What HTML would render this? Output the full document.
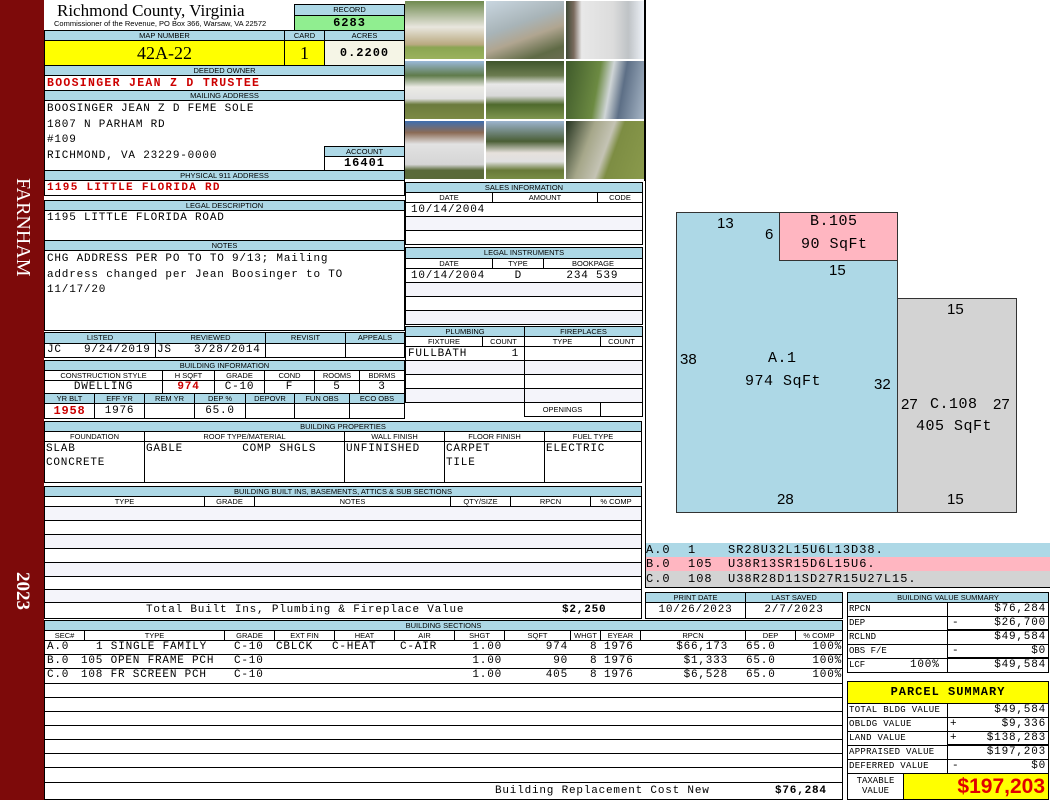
<!DOCTYPE html>
<html><head><meta charset="utf-8"><style>
*{margin:0;padding:0;box-sizing:border-box}
body{width:1050px;height:800px;position:relative;background:#fff;overflow:hidden;font-family:"Liberation Mono",monospace}
div,span.a{position:absolute}
.b{border:1px solid #000;background:#fff;overflow:hidden;white-space:nowrap}
.l{border:1px solid #000;background:#add8e6;font:7.5px/9px "Liberation Sans",sans-serif;text-align:center;overflow:hidden;white-space:nowrap;color:#000}
.h{border:1px solid #000;background:#fff;font:7.5px/9px "Liberation Sans",sans-serif;text-align:center;overflow:hidden;white-space:nowrap}
.m{font:11px/13px "Liberation Mono",monospace;letter-spacing:0.8px}
.r{color:#cc0000;font-weight:bold}
.g{background:#f4f4fa}
.t{position:absolute;font:11px/13px "Liberation Mono",monospace;letter-spacing:0.8px;white-space:nowrap}
.rt{text-align:right}
</style></head><body>
<!-- red bar -->
<div style="left:0;top:0;width:44px;height:800px;background:#7d0a0a"></div>
<div style="left:22px;top:178px;width:0;height:0"><div style="transform:rotate(90deg);transform-origin:0 0;left:12px;top:0;color:#fff;font:20px 'Liberation Serif',serif;white-space:nowrap">FARNHAM</div></div>
<div style="left:22px;top:572px;width:0;height:0"><div style="transform:rotate(90deg);transform-origin:0 0;left:11px;top:0;color:#fff;font:bold 19px 'Liberation Serif',serif;white-space:nowrap">2023</div></div>

<!-- header -->
<div style="left:57px;top:1px;font:17px/20px 'Liberation Serif',serif">Richmond County, Virginia</div>
<div style="left:54px;top:19px;font:7.5px/9px 'Liberation Sans',sans-serif">Commissioner of the Revenue, PO Box 366, Warsaw, VA 22572</div>
<div class="l" style="left:294px;top:4px;width:111px;height:12px">RECORD</div>
<div class="b" style="left:294px;top:15px;width:111px;height:16px;background:#90ee90;text-align:center;font:bold 12px/14px 'Liberation Mono',monospace;letter-spacing:1px">6283</div>
<div class="l" style="left:44px;top:30px;width:241px;height:11px">MAP NUMBER</div>
<div class="l" style="left:284px;top:30px;width:41px;height:11px">CARD</div>
<div class="l" style="left:324px;top:30px;width:81px;height:11px">ACRES</div>
<div class="b" style="left:44px;top:40px;width:241px;height:26px;background:#ffff00;text-align:center;font:18px/24px 'Liberation Serif',serif">42A-22</div>
<div class="b" style="left:284px;top:40px;width:41px;height:26px;background:#ffff00;text-align:center;font:18px/24px 'Liberation Serif',serif">1</div>
<div class="b" style="left:324px;top:40px;width:81px;height:26px;background:#f5f5e6;text-align:center;font:bold 12px/24px 'Liberation Mono',monospace;letter-spacing:1px">0.2200</div>
<div class="l" style="left:44px;top:65px;width:361px;height:11px">DEEDED OWNER</div>
<div class="b m r" style="left:44px;top:75px;width:361px;height:16px;padding-left:2px;font-size:11.5px;line-height:15px;letter-spacing:1.3px">BOOSINGER JEAN Z D TRUSTEE</div>
<div class="l" style="left:44px;top:90px;width:361px;height:11px">MAILING ADDRESS</div>
<div class="b m" style="left:44px;top:100px;width:361px;height:71px;padding:1px 2px;line-height:15.5px;white-space:pre">BOOSINGER JEAN Z D FEME SOLE
1807 N PARHAM RD
#109
RICHMOND, VA 23229-0000</div>
<div class="l" style="left:324px;top:146px;width:81px;height:11px">ACCOUNT</div>
<div class="b" style="left:324px;top:156px;width:81px;height:15px;text-align:center;font:bold 12px/13px 'Liberation Mono',monospace;letter-spacing:1px">16401</div>
<div class="l" style="left:44px;top:170px;width:361px;height:11px">PHYSICAL 911 ADDRESS</div>
<div class="b m r" style="left:44px;top:180px;width:361px;height:16px;padding-left:2px;line-height:14px;letter-spacing:1.3px">1195 LITTLE FLORIDA RD</div>
<div class="l" style="left:44px;top:200px;width:361px;height:11px">LEGAL DESCRIPTION</div>
<div class="b m" style="left:44px;top:210px;width:361px;height:31px;padding:1px 2px">1195 LITTLE FLORIDA ROAD</div>
<div class="l" style="left:44px;top:240px;width:361px;height:11px">NOTES</div>
<div class="b m" style="left:44px;top:250px;width:361px;height:81px;padding:1px 2px;line-height:15.5px;white-space:pre">CHG ADDRESS PER PO TO TO 9/13; Mailing
address changed per Jean Boosinger to TO
11/17/20</div>

<!-- listed -->
<div class="l" style="left:44px;top:332px;width:112px;height:12px">LISTED</div>
<div class="l" style="left:155px;top:332px;width:111px;height:12px">REVIEWED</div>
<div class="l" style="left:265px;top:332px;width:81px;height:12px">REVISIT</div>
<div class="l" style="left:345px;top:332px;width:60px;height:12px">APPEALS</div>
<div class="b m" style="left:44px;top:343px;width:112px;height:15px;padding-left:2px;white-space:pre">JC   9/24/2019</div>
<div class="b m" style="left:155px;top:343px;width:111px;height:15px;padding-left:1px;white-space:pre">JS   3/28/2014</div>
<div class="b" style="left:265px;top:343px;width:81px;height:15px"></div>
<div class="b" style="left:345px;top:343px;width:60px;height:15px"></div>

<!-- building info -->
<div class="l" style="left:44px;top:360px;width:361px;height:11px">BUILDING INFORMATION</div>
<div class="h" style="left:44px;top:370px;width:119px;height:11px">CONSTRUCTION STYLE</div>
<div class="h" style="left:162px;top:370px;width:53px;height:11px">H SQFT</div>
<div class="h" style="left:214px;top:370px;width:51px;height:11px">GRADE</div>
<div class="h" style="left:264px;top:370px;width:51px;height:11px">COND</div>
<div class="h" style="left:314px;top:370px;width:46px;height:11px">ROOMS</div>
<div class="h" style="left:359px;top:370px;width:46px;height:11px">BDRMS</div>
<div class="b m" style="left:44px;top:380px;width:119px;height:14px;text-align:center;line-height:12px">DWELLING</div>
<div class="b m r" style="left:162px;top:380px;width:53px;height:14px;text-align:center;line-height:12px">974</div>
<div class="b m" style="left:214px;top:380px;width:51px;height:14px;text-align:center;line-height:12px">C-10</div>
<div class="b m" style="left:264px;top:380px;width:51px;height:14px;text-align:center;line-height:12px">F</div>
<div class="b m" style="left:314px;top:380px;width:46px;height:14px;text-align:center;line-height:12px">5</div>
<div class="b m" style="left:359px;top:380px;width:46px;height:14px;text-align:center;line-height:12px">3</div>
<div class="l" style="left:44px;top:393px;width:51px;height:11px">YR BLT</div>
<div class="l" style="left:94px;top:393px;width:51px;height:11px">EFF YR</div>
<div class="l" style="left:144px;top:393px;width:51px;height:11px">REM YR</div>
<div class="l" style="left:194px;top:393px;width:52px;height:11px">DEP %</div>
<div class="l" style="left:245px;top:393px;width:50px;height:11px">DEPOVR</div>
<div class="l" style="left:294px;top:393px;width:56px;height:11px">FUN OBS</div>
<div class="l" style="left:349px;top:393px;width:56px;height:11px">ECO OBS</div>
<div class="b m r" style="left:44px;top:403px;width:51px;height:16px;text-align:center;line-height:14px;font-size:12px">1958</div>
<div class="b m" style="left:94px;top:403px;width:51px;height:16px;text-align:center;line-height:14px">1976</div>
<div class="b" style="left:144px;top:403px;width:51px;height:16px"></div>
<div class="b m" style="left:194px;top:403px;width:52px;height:16px;text-align:center;line-height:14px">65.0</div>
<div class="b" style="left:245px;top:403px;width:50px;height:16px"></div>
<div class="b" style="left:294px;top:403px;width:56px;height:16px"></div>
<div class="b" style="left:349px;top:403px;width:56px;height:16px"></div>

<!-- building properties -->
<div class="l" style="left:44px;top:421px;width:598px;height:11px">BUILDING PROPERTIES</div>
<div class="h" style="left:44px;top:431px;width:101px;height:11px">FOUNDATION</div>
<div class="h" style="left:144px;top:431px;width:201px;height:11px">ROOF TYPE/MATERIAL</div>
<div class="h" style="left:344px;top:431px;width:101px;height:11px">WALL FINISH</div>
<div class="h" style="left:444px;top:431px;width:101px;height:11px">FLOOR FINISH</div>
<div class="h" style="left:544px;top:431px;width:98px;height:11px">FUEL TYPE</div>
<div class="b m" style="left:44px;top:441px;width:101px;height:42px;padding-left:1px;white-space:pre;line-height:14px">SLAB
CONCRETE</div>
<div class="b m" style="left:144px;top:441px;width:201px;height:42px;padding-left:1px;white-space:pre;line-height:14px">GABLE        COMP SHGLS</div>
<div class="b m" style="left:344px;top:441px;width:101px;height:42px;padding-left:1px;line-height:14px">UNFINISHED</div>
<div class="b m" style="left:444px;top:441px;width:101px;height:42px;padding-left:1px;white-space:pre;line-height:14px">CARPET
TILE</div>
<div class="b m" style="left:544px;top:441px;width:98px;height:42px;padding-left:1px;line-height:14px">ELECTRIC</div>

<!-- built ins -->
<div class="l" style="left:44px;top:486px;width:598px;height:11px">BUILDING BUILT INS, BASEMENTS, ATTICS &amp; SUB SECTIONS</div>
<div class="h" style="left:44px;top:496px;width:161px;height:11px">TYPE</div>
<div class="h" style="left:204px;top:496px;width:51px;height:11px">GRADE</div>
<div class="h" style="left:254px;top:496px;width:197px;height:11px">NOTES</div>
<div class="h" style="left:450px;top:496px;width:61px;height:11px">QTY/SIZE</div>
<div class="h" style="left:510px;top:496px;width:81px;height:11px">RPCN</div>
<div class="h" style="left:590px;top:496px;width:52px;height:11px">% COMP</div>
<div class="b g" style="left:44px;top:506px;width:598px;height:15px"></div>
<div class="b" style="left:44px;top:520px;width:598px;height:15px"></div>
<div class="b g" style="left:44px;top:534px;width:598px;height:15px"></div>
<div class="b" style="left:44px;top:548px;width:598px;height:15px"></div>
<div class="b g" style="left:44px;top:562px;width:598px;height:15px"></div>
<div class="b" style="left:44px;top:576px;width:598px;height:14px"></div>
<div class="b g" style="left:44px;top:589px;width:598px;height:14px"></div>
<div class="b" style="left:44px;top:602px;width:598px;height:17px"></div>
<div class="t" style="left:146px;top:604px">Total Built Ins, Plumbing &amp; Fireplace Value</div>
<div class="t" style="left:562px;top:604px;font-weight:bold">$2,250</div>

<!-- building sections -->
<div class="l" style="left:44px;top:620px;width:799px;height:11px">BUILDING SECTIONS</div>
<div class="h" style="left:44px;top:630px;width:41px;height:11px">SEC#</div>
<div class="h" style="left:84px;top:630px;width:141px;height:11px">TYPE</div>
<div class="h" style="left:224px;top:630px;width:51px;height:11px">GRADE</div>
<div class="h" style="left:274px;top:630px;width:61px;height:11px">EXT FIN</div>
<div class="h" style="left:334px;top:630px;width:61px;height:11px">HEAT</div>
<div class="h" style="left:394px;top:630px;width:61px;height:11px">AIR</div>
<div class="h" style="left:454px;top:630px;width:51px;height:11px">SHGT</div>
<div class="h" style="left:504px;top:630px;width:67px;height:11px">SQFT</div>
<div class="h" style="left:570px;top:630px;width:31px;height:11px">WHGT</div>
<div class="h" style="left:600px;top:630px;width:41px;height:11px">EYEAR</div>
<div class="h" style="left:640px;top:630px;width:106px;height:11px">RPCN</div>
<div class="h" style="left:745px;top:630px;width:51px;height:11px">DEP</div>
<div class="h" style="left:795px;top:630px;width:48px;height:11px">% COMP</div>
<div class="b" style="left:44px;top:640px;width:799px;height:15px"></div>
<div class="b" style="left:44px;top:654px;width:799px;height:15px"></div>
<div class="b" style="left:44px;top:668px;width:799px;height:16px"></div>
<!-- row A -->
<div class="t" style="left:47px;top:641px">A.0</div>
<div class="t" style="left:96px;top:641px">1 SINGLE FAMILY</div>
<div class="t" style="left:234px;top:641px">C-10</div>
<div class="t" style="left:276px;top:641px">CBLCK</div>
<div class="t" style="left:332px;top:641px">C-HEAT</div>
<div class="t" style="left:400px;top:641px">C-AIR</div>
<div class="t rt" style="left:440px;width:62px;top:641px">1.00</div>
<div class="t rt" style="left:510px;width:58px;top:641px">974</div>
<div class="t" style="left:590px;top:641px">8</div>
<div class="t" style="left:604px;top:641px">1976</div>
<div class="t rt" style="left:640px;width:88px;top:641px">$66,173</div>
<div class="t" style="left:746px;top:641px">65.0</div>
<div class="t rt" style="left:790px;width:52px;top:641px">100%</div>
<!-- row B -->
<div class="t" style="left:47px;top:655px">B.0</div>
<div class="t" style="left:81px;top:655px">105 OPEN FRAME PCH</div>
<div class="t" style="left:234px;top:655px">C-10</div>
<div class="t rt" style="left:440px;width:62px;top:655px">1.00</div>
<div class="t rt" style="left:510px;width:58px;top:655px">90</div>
<div class="t" style="left:590px;top:655px">8</div>
<div class="t" style="left:604px;top:655px">1976</div>
<div class="t rt" style="left:640px;width:88px;top:655px">$1,333</div>
<div class="t" style="left:746px;top:655px">65.0</div>
<div class="t rt" style="left:790px;width:52px;top:655px">100%</div>
<!-- row C -->
<div class="t" style="left:47px;top:669px">C.0</div>
<div class="t" style="left:81px;top:669px">108 FR SCREEN PCH</div>
<div class="t" style="left:234px;top:669px">C-10</div>
<div class="t rt" style="left:440px;width:62px;top:669px">1.00</div>
<div class="t rt" style="left:510px;width:58px;top:669px">405</div>
<div class="t" style="left:590px;top:669px">8</div>
<div class="t" style="left:604px;top:669px">1976</div>
<div class="t rt" style="left:640px;width:88px;top:669px">$6,528</div>
<div class="t" style="left:746px;top:669px">65.0</div>
<div class="t rt" style="left:790px;width:52px;top:669px">100%</div>

<div class="b" style="left:44px;top:683px;width:799px;height:15px"></div>
<div class="b" style="left:44px;top:697px;width:799px;height:15px"></div>
<div class="b" style="left:44px;top:711px;width:799px;height:15px"></div>
<div class="b" style="left:44px;top:725px;width:799px;height:15px"></div>
<div class="b" style="left:44px;top:739px;width:799px;height:15px"></div>
<div class="b" style="left:44px;top:753px;width:799px;height:15px"></div>
<div class="b" style="left:44px;top:767px;width:799px;height:16px"></div>
<div class="b" style="left:44px;top:782px;width:799px;height:18px"></div>
<div class="t" style="left:495px;top:785px">Building Replacement Cost New</div>
<div class="t" style="left:775px;top:785px;font-weight:bold">$76,284</div>

<!-- photos -->
<div style="left:405px;top:0;width:240px;height:181px;background:#fff;border-right:1px solid #000"></div>
<div style="left:405px;top:1px;width:79px;height:58px;background:linear-gradient(#6f8a4f 0,#e8e6de 45%,#b9a980 75%,#8aa552 80%,#9bb25e)"></div>
<div style="left:486px;top:1px;width:78px;height:58px;background:linear-gradient(160deg,#c9d6e0 0,#a8b4b8 40%,#b0a590 60%,#5f6a45 85%,#6b6d52)"></div>
<div style="left:566px;top:1px;width:78px;height:58px;background:linear-gradient(90deg,#3f4a35 0,#7a6b5e 10%,#e8e8e8 20%,#dcdcdc 60%,#bfc3c6 80%,#eef2f8)"></div>
<div style="left:405px;top:61px;width:79px;height:58px;background:linear-gradient(#9ab8d8 0,#5f7b4a 25%,#ecebe6 45%,#e0e0e0 65%,#6b7a3c 75%,#7c8a45)"></div>
<div style="left:486px;top:61px;width:78px;height:58px;background:linear-gradient(#40552c 0,#6b7c50 25%,#e8e8e8 40%,#d8d8d8 60%,#4f6a2d 75%,#7f9650)"></div>
<div style="left:566px;top:61px;width:78px;height:58px;background:linear-gradient(100deg,#3f5a2b 0,#6c8a42 40%,#cfd5d6 55%,#5d6f86 70%,#a7b6c6)"></div>
<div style="left:405px;top:121px;width:79px;height:58px;background:linear-gradient(#3f6fb0 0,#8b6b55 20%,#e2e2e2 40%,#d5d5d5 75%,#5a6a3a 85%)"></div>
<div style="left:486px;top:121px;width:78px;height:58px;background:linear-gradient(#9cb4cf 0,#4a5e35 35%,#e6e1dc 55%,#e0e0e0 70%,#687a38 85%,#788c45)"></div>
<div style="left:566px;top:121px;width:78px;height:58px;background:linear-gradient(110deg,#243320 0,#a6a78a 30%,#c4c3b4 50%,#7d8d43 60%,#8a9a4c)"></div>

<!-- sales -->
<div class="l" style="left:405px;top:182px;width:238px;height:11px">SALES INFORMATION</div>
<div class="h" style="left:405px;top:192px;width:88px;height:11px">DATE</div>
<div class="h" style="left:492px;top:192px;width:106px;height:11px">AMOUNT</div>
<div class="h" style="left:597px;top:192px;width:46px;height:11px">CODE</div>
<div class="b m" style="left:405px;top:202px;width:238px;height:15px;padding-left:5px;line-height:15px">10/14/2004</div>
<div class="b g" style="left:405px;top:216px;width:238px;height:15px"></div>
<div class="b" style="left:405px;top:230px;width:238px;height:15px"></div>
<div class="l" style="left:405px;top:247px;width:238px;height:12px">LEGAL INSTRUMENTS</div>
<div class="h" style="left:405px;top:258px;width:88px;height:11px">DATE</div>
<div class="h" style="left:492px;top:258px;width:52px;height:11px">TYPE</div>
<div class="h" style="left:543px;top:258px;width:100px;height:11px">BOOKPAGE</div>
<div class="b m" style="left:405px;top:268px;width:238px;height:15px;padding-left:5px;white-space:pre;line-height:15px">10/14/2004    D      234 539</div>
<div class="b g" style="left:405px;top:282px;width:238px;height:15px"></div>
<div class="b" style="left:405px;top:296px;width:238px;height:15px"></div>
<div class="b g" style="left:405px;top:310px;width:238px;height:15px"></div>
<div class="l" style="left:405px;top:326px;width:120px;height:11px">PLUMBING</div>
<div class="l" style="left:524px;top:326px;width:119px;height:11px">FIREPLACES</div>
<div class="h" style="left:405px;top:336px;width:78px;height:11px">FIXTURE</div>
<div class="h" style="left:482px;top:336px;width:43px;height:11px">COUNT</div>
<div class="h" style="left:524px;top:336px;width:77px;height:11px">TYPE</div>
<div class="h" style="left:600px;top:336px;width:43px;height:11px">COUNT</div>
<div class="b m" style="left:405px;top:346px;width:120px;height:15px;padding-left:2px;white-space:pre;line-height:14px">FULLBATH      1</div>
<div class="b g" style="left:405px;top:360px;width:120px;height:15px"></div>
<div class="b" style="left:405px;top:374px;width:120px;height:15px"></div>
<div class="b g" style="left:405px;top:388px;width:120px;height:15px"></div>
<div class="b" style="left:524px;top:346px;width:119px;height:15px"></div>
<div class="b g" style="left:524px;top:360px;width:119px;height:15px"></div>
<div class="b" style="left:524px;top:374px;width:119px;height:15px"></div>
<div class="b g" style="left:524px;top:388px;width:119px;height:15px"></div>
<div class="h" style="left:524px;top:402px;width:77px;height:15px;line-height:13px">OPENINGS</div>
<div class="b" style="left:600px;top:402px;width:43px;height:15px"></div>

<!-- sketch -->
<div style="left:645px;top:0;width:405px;height:544px;border:1px solid #000;border-top:0;border-right:0;background:#fff"></div>
<div style="left:676px;top:212px;width:222px;height:301px;background:#add8e6;border:1px solid #333"></div>
<div style="left:779px;top:212px;width:119px;height:49px;background:#ffb6c1;border:1px solid #333"></div>
<div style="left:897px;top:298px;width:120px;height:215px;background:#d3d3d3;border:1px solid #333"></div>
<div style="left:717px;top:215px;font:15px 'Liberation Sans',sans-serif">13</div>
<div style="left:765px;top:226px;font:15px 'Liberation Sans',sans-serif">6</div>
<div style="left:810px;top:213px;font:15px/18px 'Liberation Mono',monospace;letter-spacing:0.5px">B.105</div>
<div style="left:801px;top:236px;font:15px/18px 'Liberation Mono',monospace;letter-spacing:0.5px">90 SqFt</div>
<div style="left:829px;top:262px;font:15px 'Liberation Sans',sans-serif">15</div>
<div style="left:947px;top:301px;font:15px 'Liberation Sans',sans-serif">15</div>
<div style="left:680px;top:351px;font:15px 'Liberation Sans',sans-serif">38</div>
<div style="left:768px;top:350px;font:15px/18px 'Liberation Mono',monospace;letter-spacing:0.5px">A.1</div>
<div style="left:745px;top:373px;font:15px/18px 'Liberation Mono',monospace;letter-spacing:0.5px">974 SqFt</div>
<div style="left:874px;top:376px;font:15px 'Liberation Sans',sans-serif">32</div>
<div style="left:901px;top:396px;font:15px 'Liberation Sans',sans-serif">27</div>
<div style="left:930px;top:396px;font:15px/18px 'Liberation Mono',monospace;letter-spacing:0.5px">C.108</div>
<div style="left:993px;top:396px;font:15px 'Liberation Sans',sans-serif">27</div>
<div style="left:916px;top:418px;font:15px/18px 'Liberation Mono',monospace;letter-spacing:0.5px">405 SqFt</div>
<div style="left:777px;top:491px;font:15px 'Liberation Sans',sans-serif">28</div>
<div style="left:947px;top:491px;font:15px 'Liberation Sans',sans-serif">15</div>
<div style="left:645px;top:543px;width:405px;height:15px;background:#add8e6;border-left:1px solid #000"></div>
<div style="left:645px;top:557px;width:405px;height:15px;background:#ffb6c1;border-left:1px solid #000"></div>
<div style="left:645px;top:571px;width:405px;height:17px;background:#d3d3d3;border-left:1px solid #000;border-bottom:1px solid #000"></div>
<div class="t" style="left:646px;top:544px;font-size:12px;letter-spacing:1px">A.0</div>
<div class="t" style="left:688px;top:544px;font-size:12px">1</div>
<div class="t" style="left:728px;top:544px;font-size:12px;letter-spacing:1px">SR28U32L15U6L13D38.</div>
<div class="t" style="left:646px;top:558px;font-size:12px;letter-spacing:1px">B.0</div>
<div class="t" style="left:688px;top:558px;font-size:12px;letter-spacing:1px">105</div>
<div class="t" style="left:728px;top:558px;font-size:12px;letter-spacing:1px">U38R13SR15D6L15U6.</div>
<div class="t" style="left:646px;top:573px;font-size:12px;letter-spacing:1px">C.0</div>
<div class="t" style="left:688px;top:573px;font-size:12px;letter-spacing:1px">108</div>
<div class="t" style="left:728px;top:573px;font-size:12px;letter-spacing:1px">U38R28D11SD27R15U27L15.</div>

<!-- print date -->
<div class="l" style="left:645px;top:592px;width:101px;height:11px">PRINT DATE</div>
<div class="l" style="left:745px;top:592px;width:98px;height:11px">LAST SAVED</div>
<div class="b m" style="left:645px;top:602px;width:101px;height:17px;text-align:center;line-height:15px">10/26/2023</div>
<div class="b m" style="left:745px;top:602px;width:98px;height:17px;text-align:center;line-height:15px">2/7/2023</div>

<!-- BVS -->
<div class="l" style="left:847px;top:592px;width:202px;height:11px">BUILDING VALUE SUMMARY</div>
<div class="b m" style="left:847px;top:602px;width:101px;height:15px;font-size:9px;padding-left:1px;letter-spacing:0">RPCN</div>
<div class="b m" style="left:947px;top:602px;width:102px;height:15px;text-align:right;padding-right:2px">$76,284</div>
<div class="b m" style="left:847px;top:616px;width:101px;height:15px;font-size:9px;padding-left:1px;letter-spacing:0">DEP</div>
<div class="b m" style="left:947px;top:616px;width:102px;height:15px;text-align:right;padding-right:2px;border-bottom:2px solid #000">$26,700</div>
<div class="t" style="left:952px;top:617px">-</div>
<div class="b m" style="left:847px;top:630px;width:101px;height:15px;font-size:9px;padding-left:1px;letter-spacing:0">RCLND</div>
<div class="b m" style="left:947px;top:630px;width:102px;height:15px;text-align:right;padding-right:2px">$49,584</div>
<div class="b m" style="left:847px;top:644px;width:101px;height:15px;font-size:9px;padding-left:1px;letter-spacing:0">OBS F/E</div>
<div class="b m" style="left:947px;top:644px;width:102px;height:15px;text-align:right;padding-right:2px;border-bottom:2px solid #000">$0</div>
<div class="t" style="left:952px;top:645px">-</div>
<div class="b m" style="left:847px;top:658px;width:101px;height:15px;font-size:9px;padding-left:1px;letter-spacing:0">LCF</div>
<div class="t" style="left:910px;top:659px">100%</div>
<div class="b m" style="left:947px;top:658px;width:102px;height:15px;text-align:right;padding-right:2px">$49,584</div>

<!-- parcel summary -->
<div class="b" style="left:847px;top:681px;width:202px;height:23px;background:#ffff00;text-align:center;font:bold 12px/21px 'Liberation Mono',monospace;letter-spacing:1px">PARCEL SUMMARY</div>
<div class="b m" style="left:847px;top:703px;width:101px;height:15px;font-size:9px;padding-left:1px;letter-spacing:0.3px">TOTAL BLDG VALUE</div>
<div class="b m" style="left:947px;top:703px;width:102px;height:15px;text-align:right;padding-right:2px">$49,584</div>
<div class="b m" style="left:847px;top:717px;width:101px;height:15px;font-size:9px;padding-left:1px;letter-spacing:0.3px">OBLDG VALUE</div>
<div class="b m" style="left:947px;top:717px;width:102px;height:15px;text-align:right;padding-right:2px">$9,336</div>
<div class="t" style="left:950px;top:718px">+</div>
<div class="b m" style="left:847px;top:731px;width:101px;height:15px;font-size:9px;padding-left:1px;letter-spacing:0.3px">LAND VALUE</div>
<div class="b m" style="left:947px;top:731px;width:102px;height:15px;text-align:right;padding-right:2px;border-bottom:2px solid #000">$138,283</div>
<div class="t" style="left:950px;top:732px">+</div>
<div class="b m" style="left:847px;top:745px;width:101px;height:15px;font-size:9px;padding-left:1px;letter-spacing:0.3px">APPRAISED VALUE</div>
<div class="b m" style="left:947px;top:745px;width:102px;height:15px;text-align:right;padding-right:2px">$197,203</div>
<div class="b m" style="left:847px;top:759px;width:101px;height:15px;font-size:9px;padding-left:1px;letter-spacing:0.3px">DEFERRED VALUE</div>
<div class="b m" style="left:947px;top:759px;width:102px;height:15px;text-align:right;padding-right:2px">$0</div>
<div class="t" style="left:952px;top:760px">-</div>
<div class="b" style="left:847px;top:773px;width:57px;height:27px;font:9px/10px 'Liberation Mono',monospace;text-align:center;padding-top:2px;white-space:normal">TAXABLE VALUE</div>
<div class="b" style="left:903px;top:773px;width:146px;height:27px;background:#ffff00;text-align:right;padding-right:3px;color:#e00000;font:bold 21px/25px 'Liberation Sans',sans-serif">$197,203</div>
</body></html>
